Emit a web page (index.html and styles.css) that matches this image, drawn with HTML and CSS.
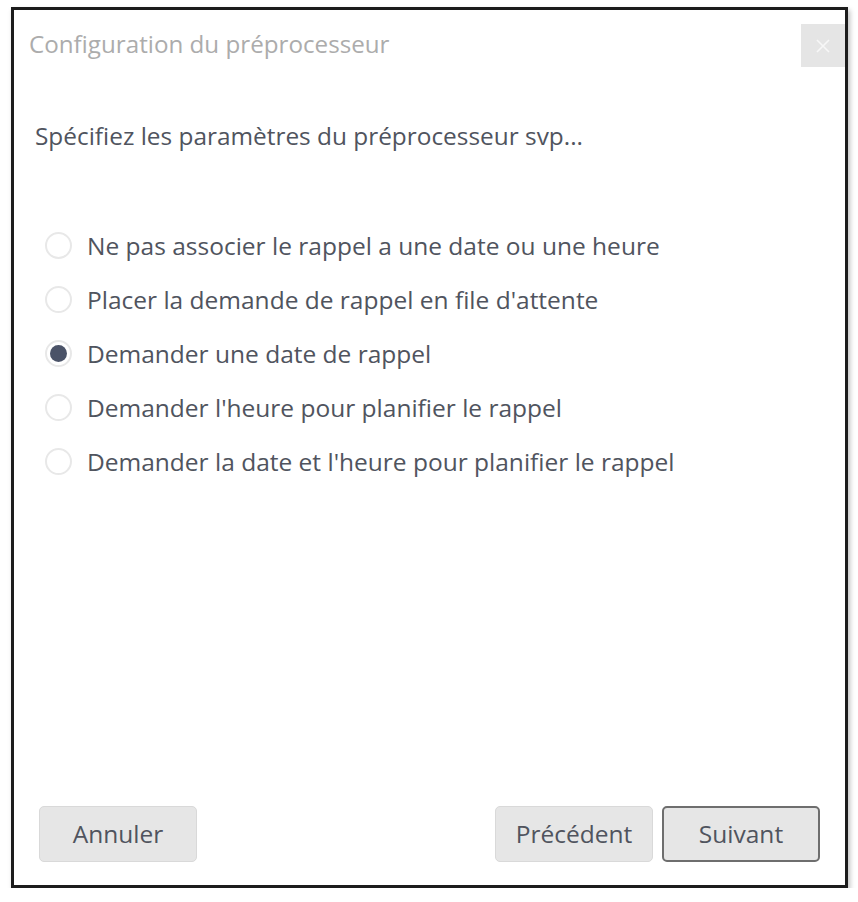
FILE: index.html
```html
<!DOCTYPE html>
<html lang="fr">
<head>
<meta charset="utf-8">
<title>Configuration du préprocesseur</title>
<link rel="stylesheet" href="styles.css">
</head>
<body>
<div class="dialog">
  <div class="header">
    <div class="title">Configuration du préprocesseur</div>
    <div class="close" title="Fermer">
      <svg width="14" height="14" viewBox="0 0 14 14" aria-hidden="true"><path d="M1 1 L13 13 M13 1 L1 13" stroke="#f7f7f7" stroke-width="1.6" fill="none"/></svg>
    </div>
  </div>
  <div class="prompt">Spécifiez les paramètres du préprocesseur svp...</div>
  <div class="options">
    <label class="option"><span class="radio"></span><span class="label">Ne pas associer le rappel a une date ou une heure</span></label>
    <label class="option"><span class="radio"></span><span class="label">Placer la demande de rappel en file d'attente</span></label>
    <label class="option"><span class="radio checked"></span><span class="label">Demander une date de rappel</span></label>
    <label class="option"><span class="radio"></span><span class="label">Demander l'heure pour planifier le rappel</span></label>
    <label class="option"><span class="radio"></span><span class="label">Demander la date et l'heure pour planifier le rappel</span></label>
  </div>
  <div class="footer">
    <div class="btn">Annuler</div>
    <div class="nav">
      <div class="btn">Précédent</div>
      <div class="btn primary">Suivant</div>
    </div>
  </div>
</div>
</body>
</html>
```
FILE: styles.css
```css
html, body {
  margin: 0;
  padding: 0;
  background: #ffffff;
}
body {
  font-family: "Open Sans", "Noto Sans", "DejaVu Sans", sans-serif;
  color: #50545e;
}
.dialog {
  box-sizing: border-box;
  width: 837px;
  height: 881px;
  margin: 7px 0 0 11px;
  border: 3px solid #1c1c1c;
  background: #ffffff;
  box-shadow: 2px 3px 5px rgba(0,0,0,0.25);
  display: flex;
  flex-direction: column;
}
.header {
  display: flex;
  justify-content: space-between;
  align-items: flex-start;
}
.title {
  margin: 18px 0 0 15px;
  font-size: 24.2px;
  line-height: 32px;
  color: #acacac;
}
.close {
  margin-top: 14px;
  width: 44px;
  height: 43px;
  background: #e5e5e5;
  display: flex;
  align-items: center;
  justify-content: center;
}
.prompt {
  margin: 53px 0 0 21px;
  font-size: 24.4px;
  line-height: 32px;
  color: #50545e;
}
.options {
  margin: 77px 0 0 31px;
  display: flex;
  flex-direction: column;
  gap: 22px;
}
.option {
  display: flex;
  align-items: center;
  gap: 15px;
  height: 32px;
  font-size: 24.5px;
}
.radio {
  box-sizing: border-box;
  width: 27px;
  height: 27px;
  border-radius: 50%;
  border: 2px solid #e8e8e8;
  background: #ffffff;
  display: flex;
  align-items: center;
  justify-content: center;
}
.radio.checked::after {
  content: "";
  width: 17px;
  height: 17px;
  border-radius: 50%;
  background: #4b5368;
}
.footer {
  margin-top: auto;
  padding: 0 25px 23px 25px;
  display: flex;
  justify-content: space-between;
  align-items: flex-end;
}
.nav {
  display: flex;
  gap: 9px;
}
.btn {
  box-sizing: border-box;
  width: 158px;
  height: 56px;
  border: 1px solid #d9d9d9;
  border-radius: 5px;
  background: #e6e6e6;
  font-size: 24.5px;
  line-height: 54px;
  text-align: center;
  color: #50545e;
}
.btn.primary {
  border: 2px solid #6e6e6e;
  line-height: 52px;
}
```
